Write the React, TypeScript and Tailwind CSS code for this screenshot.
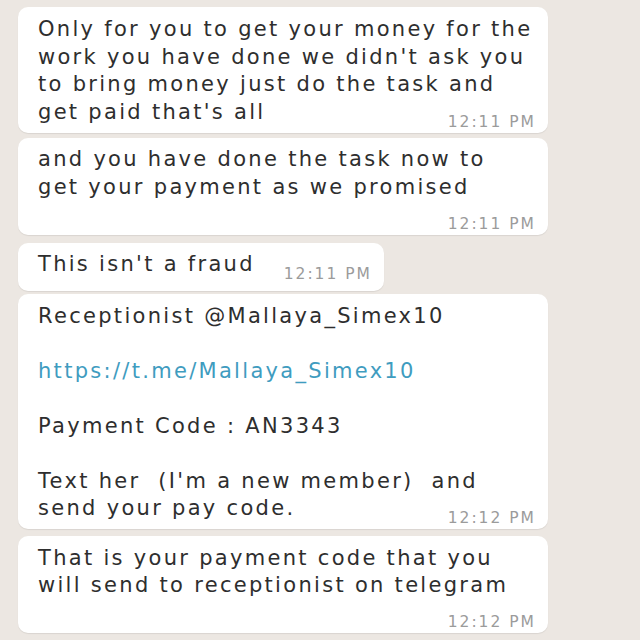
import React from "react";

const font = { fontFamily: '"DejaVu Sans", Verdana, sans-serif' };

function Time({ t }: { t: string }) {
  return (
    <span className="text-[15.5px] text-[#9b9b9b] tracking-[2px] leading-none whitespace-nowrap">
      {t}
    </span>
  );
}

function Line({ children }: { children?: React.ReactNode }) {
  return <div className="h-[27.5px] leading-[27.5px] whitespace-nowrap">{children}</div>;
}

function LastLine({ text, time }: { text: string; time: string }) {
  return (
    <div className="flex justify-between items-end h-[27.5px] leading-[27.5px] whitespace-nowrap">
      <span>{text}</span>
      <span className="relative top-[8px] -mr-[2px]">
        <Time t={time} />
      </span>
    </div>
  );
}

const bubble =
  "bg-white rounded-[10px] pl-[20px] pr-[14px] shadow-[0_1px_1px_rgba(0,0,0,0.08)]";

export default function App() {
  return (
    <div
      className="w-[640px] h-[640px] overflow-hidden bg-[#ece7e2] pl-[18px] pt-[7px] flex flex-col text-[21px] text-[#2e2e2e] tracking-[2.3px]"
      style={font}
    >
      {/* Bubble 1 */}
      <div className={`w-[530px] ${bubble} pt-[9px] pb-[7px]`}>
        <Line>Only for you to get your money for the</Line>
        <Line>work you have done we didn't ask you</Line>
        <Line>to bring money just do the task and</Line>
        <LastLine text="get paid that's all" time="12:11 PM" />
      </div>

      {/* Bubble 2 */}
      <div className={`w-[530px] ${bubble} mt-[5px] pt-[8px] pb-[4px]`}>
        <Line>and you have done the task now to</Line>
        <Line>get your payment as we promised</Line>
        <div className="flex justify-end h-[30px] items-center pt-[17px] -mr-[2px]">
          <Time t="12:11 PM" />
        </div>
      </div>

      {/* Bubble 3 */}
      <div className={`w-[366px] ${bubble} mt-[8px] pt-[8px] pb-[12px]`}>
        <LastLine text="This isn't a fraud" time="12:11 PM" />
      </div>

      {/* Bubble 4 */}
      <div className={`w-[530px] ${bubble} mt-[3px] pt-[9px] pb-[6px]`}>
        <Line>Receptionist @Mallaya_Simex10</Line>
        <Line />
        <Line>
          <span className="text-[#3f9cbf]">https://t.me/Mallaya_Simex10</span>
        </Line>
        <Line />
        <Line>Payment Code : AN3343</Line>
        <Line />
        <Line>Text her&nbsp; (I'm a new member)&nbsp; and</Line>
        <LastLine text="send your pay code." time="12:12 PM" />
      </div>

      {/* Bubble 5 */}
      <div className={`w-[530px] ${bubble} mt-[7px] pt-[9px] pb-[3px]`}>
        <Line>That is your payment code that you</Line>
        <Line>will send to receptionist on telegram</Line>
        <div className="flex justify-end h-[30px] items-center pt-[17px] -mr-[2px]">
          <Time t="12:12 PM" />
        </div>
      </div>
    </div>
  );
}
